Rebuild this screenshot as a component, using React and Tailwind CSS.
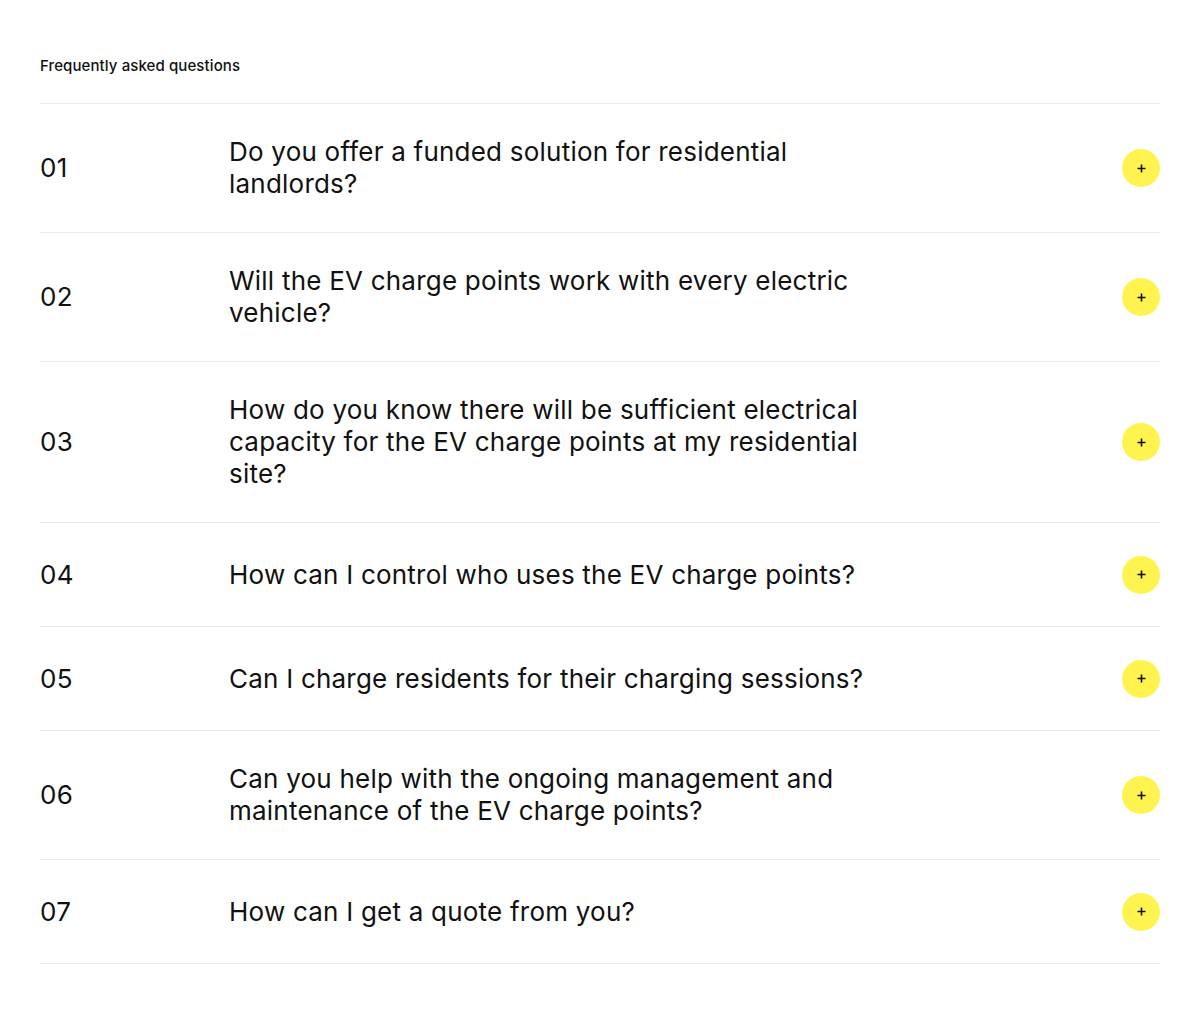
const FAQS = [
  'Do you offer a funded solution for residential landlords?',
  'Will the EV charge points work with every electric vehicle?',
  'How do you know there will be sufficient electrical capacity for the EV charge points at my residential site?',
  'How can I control who uses the EV charge points?',
  'Can I charge residents for their charging sessions?',
  'Can you help with the ongoing management and maintenance of the EV charge points?',
  'How can I get a quote from you?',
];

function PlusButton() {
  return (
    <button className="w-[38px] h-[38px] rounded-full bg-[#fff44f] flex items-center justify-center shrink-0">
      <svg width="9" height="9" viewBox="0 0 9 9">
        <path d="M4.5 0.5v8M0.5 4.5h8" stroke="#111" strokeWidth="1.6" />
      </svg>
    </button>
  );
}

export default function App() {
  return (
    <div className="min-h-[1025px] bg-white text-[#111] px-10 pt-[57px]" style={{ fontFamily: 'Inter, "Liberation Sans", sans-serif' }}>
      <h2 className="text-[15px] font-medium leading-[18px] tracking-[0.1px] mb-[28px]">Frequently asked questions</h2>
      <div className="border-t border-[#ebebeb]">
        {FAQS.map((q, i) => (
          <div key={i} className="flex items-center min-h-[104px] py-8 border-b border-[#ebebeb]">
            <div className="w-[189px] shrink-0 text-[26px] leading-[32px] tracking-[0.3px]">
              {String(i + 1).padStart(2, '0')}
            </div>
            <div className="flex-1 text-[26px] leading-[32px] tracking-[0.22px]">
              <p className="max-w-[645px]">{q}</p>
            </div>
            <PlusButton />
          </div>
        ))}
      </div>
    </div>
  );
}
